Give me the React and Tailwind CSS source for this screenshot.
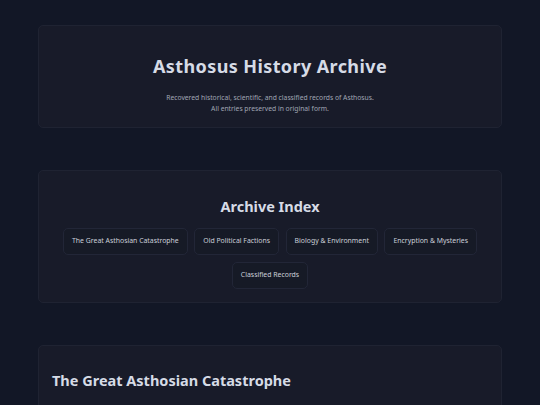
import React from "react";

const sections = [
  "The Great Asthosian Catastrophe",
  "Old Political Factions",
  "Biology & Environment",
  "Encryption & Mysteries",
  "Classified Records",
];

function App() {
  return (
    <div
      className="min-h-screen bg-[#121726] px-[38px] pt-[25px] pb-10 flex flex-col gap-[42px]"
      style={{ fontFamily: '"Noto Sans", "Open Sans", sans-serif' }}
    >
      {/* Header */}
      <div className="bg-[#181b29] border border-[#1f2332] rounded-[5px] pt-[29px] pb-[13px] px-[14px] text-center">
        <h1 className="text-[18px] leading-[22px] font-bold tracking-[0.4px] text-[#d6dbe6]">
          Asthosus History Archive
        </h1>
        <p className="mt-[15px] text-[6.75px] leading-[11px] text-[#a0a6b4]">
          Recovered historical, scientific, and classified records of Asthosus.
          <br />
          All entries preserved in original form.
        </p>
      </div>

      {/* Index */}
      <div className="bg-[#181b29] border border-[#1f2332] rounded-[5px] pt-[25px] pb-[13px] px-[14px] text-center">
        <h2 className="text-[14.5px] leading-[20px] font-bold text-[#d6dbe6]">
          Archive Index
        </h2>
        <div className="mt-[12px] flex flex-wrap justify-center gap-[6.5px]">
          {sections.map((s) => (
            <div
              key={s}
              className="h-[27px] flex items-center px-[8px] bg-[#161a26] border border-[#222637] rounded-[5px] text-[6.9px] text-[#cbcfd9]"
            >
              {s}
            </div>
          ))}
        </div>
      </div>

      {/* First entry */}
      <div className="bg-[#181b29] border border-[#1f2332] rounded-[5px] pt-[24px] pb-[20px] px-[13px] min-h-[200px]">
        <h2 className="text-[14.5px] leading-[20px] font-bold text-[#d6dbe6]">
          The Great Asthosian Catastrophe
        </h2>
      </div>
    </div>
  );
}

export default App;
